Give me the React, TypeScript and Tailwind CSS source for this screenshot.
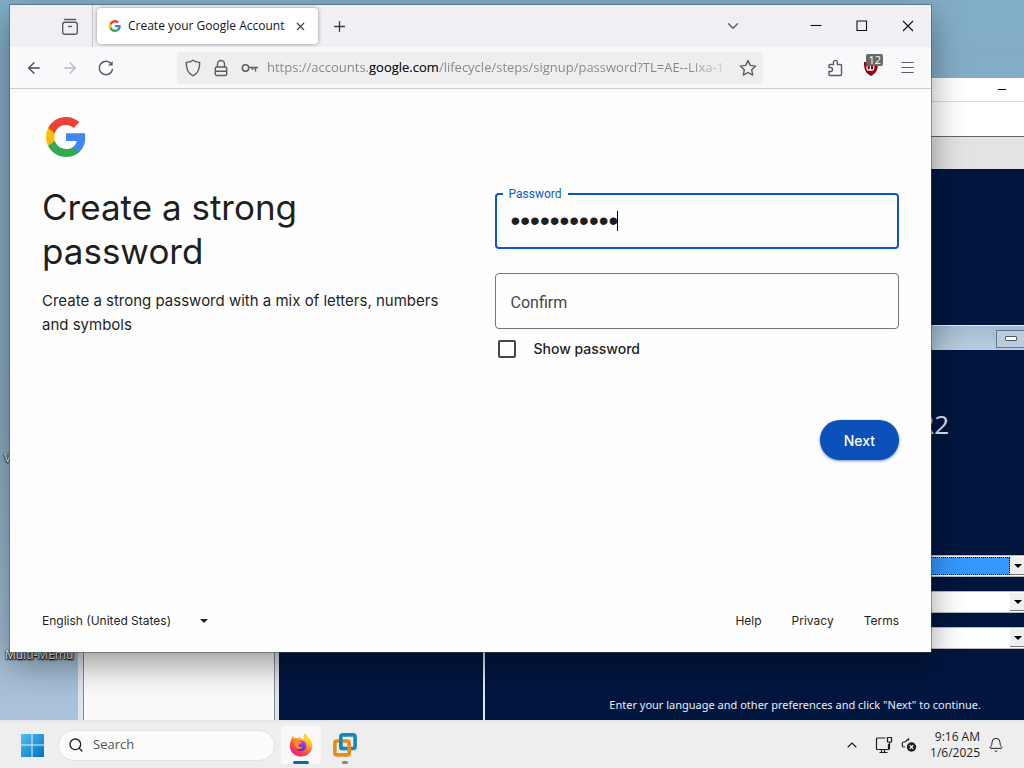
import { useState } from "react";
import type { ReactNode } from "react";
import { ArrowLeft, ArrowRight, Bell, ChevronDown, ChevronUp, Menu, Plus, Search, X } from "lucide-react";

const uiFont = "font-['Open_Sans','Noto_Sans',sans-serif]";
const pageFont = "font-['Inter',sans-serif]";

function GoogleMark({ className }: { className: string }) {
  return (
    <svg viewBox="0 0 40 40" className={className} aria-hidden="true">
      <path fill="#4285f4" d="M39.2 20.45c0-1.42-.13-2.78-.36-4.09H20v7.74h10.76c-.46 2.5-1.87 4.62-3.99 6.04v5.02h6.46c3.78-3.48 5.97-8.6 5.97-14.71z" />
      <path fill="#34a853" d="M20 40c5.4 0 9.93-1.79 13.24-4.84l-6.47-5.02c-1.79 1.2-4.08 1.9-6.77 1.9-5.2 0-9.62-3.51-11.2-8.24H2.13v5.18C5.42 35.51 12.17 40 20 40z" />
      <path fill="#fbbc04" d="M8.8 23.8c-.4-1.2-.63-2.48-.63-3.8s.23-2.6.63-3.8v-5.18H2.13A19.98 19.98 0 0 0 0 20c0 3.23.77 6.28 2.13 8.98L8.8 23.8z" />
      <path fill="#ea4335" d="M20 7.95c2.94 0 5.57 1.01 7.65 2.99l5.73-5.73C29.92 1.99 25.39 0 20 0 12.17 0 5.42 4.49 2.13 11.02L8.8 16.2C10.38 11.47 14.8 7.95 20 7.95z" />
    </svg>
  );
}

function FirefoxMark() {
  return (
    <svg viewBox="0 0 24 24" className="size-6" aria-hidden="true">
      <defs>
        <linearGradient id="flame" x1="0.85" y1="0" x2="0.2" y2="1">
          <stop offset="0" stopColor="#fff14f" />
          <stop offset="0.3" stopColor="#ffb92e" />
          <stop offset="0.6" stopColor="#ff5a36" />
          <stop offset="1" stopColor="#e31587" />
        </linearGradient>
        <linearGradient id="globe" x1="0.7" y1="0" x2="0.3" y2="1">
          <stop offset="0" stopColor="#a34bff" />
          <stop offset="1" stopColor="#4b2bb5" />
        </linearGradient>
      </defs>
      <path fill="url(#flame)" d="M15.2.6c2.2 1.3 3.6 3 4.2 4.7.6-.1 1.1.2 1.5.8 1.4 2 2.4 4.300 2.400 6.700C23.300 19 18.300 23.600 12.200 23.600 5.900 23.600.8 18.900.8 12.700c0-3 1-5.300 2-7 .1-1 .4-1.900 1.100-2.700.2 1 .7 1.700 1.400 2.200 1.100-.3 2.300-.3 3.300.1 1-.9 2.300-1.400 3.600-1.500-.4.500-.8 1.100-.9 1.800 1.300-.4 2.700-.2 3.900.5-.8-1.700-.9-3.800 0-5.500z" />
      <circle cx="12" cy="12.800" r="5.300" fill="url(#globe)" />
      <path fill="#ff8a26" d="M5.200 7.700c2-1 4.100-.7 5.500.7 1 .1 2 .6 2.300 1.300-.2 1-1.800 1.200-2.800 1.700-.9.5-.8 1.500-.1 2.200 1 .9 2.700.4 3.900-.1-.7 2-2.800 3-4.900 2.500C6.500 15.300 5 11.500 5.200 7.700z" />
      <path fill="#ffd43a" d="M15.200.6c2.200 1.300 3.600 3 4.200 4.700.4 2 .8 4 .4 6.300-.5-2.600-2-4.200-3.800-5.600-1-.9-1.500-3.400-.8-5.400z" />
    </svg>
  );
}

function VmwareMark() {
  return (
    <svg viewBox="0 0 24 24" className="size-6" fill="none" strokeWidth="3.600" aria-hidden="true">
      <rect x="7.800" y="1.900" width="14.300" height="13.600" rx="2" stroke="#1489b8" />
      <rect x="1.900" y="8" width="14.300" height="13.900" rx="2" stroke="#e8891a" />
      <path stroke="#1489b8" d="M7.800 6v8q0 1.500 1.500 1.500H12" />
    </svg>
  );
}

function IconButton({ label, className, children }: { label: string; className?: string; children: ReactNode }) {
  return (
    <button type="button" aria-label={label} className={`flex h-9 w-9 shrink-0 items-center justify-center ${className ?? "text-[#5b5b66]"}`}>
      {children}
    </button>
  );
}

function TabStrip() {
  return (
    <div className="flex h-[42px] shrink-0 items-center bg-[#f0f0f4]">
      <div className="flex w-[83px] justify-end self-stretch border-r border-[#c4c4ca] pr-1 pt-1">
        <IconButton label="View recent browsing">
          <svg viewBox="0 0 18 18" className="size-[18px]" fill="none" stroke="currentColor" strokeWidth="1.400" aria-hidden="true">
            <path d="M3.500 1.500h11" strokeLinecap="round" />
            <rect x="1.700" y="4.200" width="14.600" height="12" rx="2.200" />
            <path d="M7 8.500h4" />
          </svg>
        </IconButton>
      </div>
      <div className="ml-1 flex h-9 w-[221px] items-center rounded bg-white pl-3 pr-1 shadow-[0_0_4px_rgba(0,0,0,0.4)]">
        <GoogleMark className="size-3 shrink-0" />
        <span className="ml-[7px] grow whitespace-nowrap text-[12px] text-[#15141a]">Create your Google Account</span>
        <button type="button" aria-label="Close tab" className="flex size-7 shrink-0 items-center justify-center text-[#3b3b44]">
          <X size={13} strokeWidth={2} />
        </button>
      </div>
      <button type="button" aria-label="New tab" className="ml-[3px] flex size-9 items-center justify-center text-[#3b3b44]">
        <Plus size={17} strokeWidth={1.800} />
      </button>
      <div className="grow" />
      <IconButton label="List all tabs" className="mr-[42px] text-[#5b5b66]">
        <ChevronDown size={18} strokeWidth={1.800} />
      </IconButton>
      {[
        ["Minimize", "M0.500 5.500h11"],
        ["Maximize", "M1 1h9.500v9.500h-9.500z"],
        ["Close", "M1 1l10 10M11 1L1 11"],
      ].map(([label, d]) => (
        <button key={label} type="button" aria-label={label} className="flex h-full w-[46px] items-center justify-center">
          <svg viewBox="0 0 12 12" className="size-3" fill="none" stroke="#111" strokeWidth="1.100" aria-hidden="true">
            <path d={d} />
          </svg>
        </button>
      ))}
    </div>
  );
}

function AddressBar() {
  return (
    <div className="flex h-8 min-w-0 grow items-center rounded bg-[#eeeeef] pl-2 pr-px text-[#5b5b66]">
      <svg viewBox="0 0 16 18" className="h-[18px] w-4" fill="none" stroke="currentColor" strokeWidth="1.400" strokeLinejoin="round" aria-hidden="true">
        <path d="M8 1.200C6.200 2.600 3.800 3.300 1.300 3.400 1.200 9.500 3 14.400 8 16.800c5-2.400 6.800-7.300 6.700-13.400C12.200 3.300 9.800 2.600 8 1.200z" />
      </svg>
      <svg viewBox="0 0 14 18" className="ml-[13px] h-[18px] w-3.5" fill="none" stroke="currentColor" strokeWidth="1.400" aria-hidden="true">
        <rect x="1.300" y="8" width="11.400" height="8.500" rx="1.500" />
        <path d="M3.500 8V5a3.500 3.500 0 0 1 7 0v3M1.300 12.200h11.400" />
      </svg>
      <svg viewBox="0 0 18 12" className="ml-[13px] h-3 w-[18px] shrink-0" fill="none" stroke="currentColor" strokeWidth="1.500" aria-hidden="true">
        <circle cx="4.500" cy="6" r="3.200" />
        <path d="M7.700 5.500H17M14.500 5.500v4M11.500 5.500v2.500" />
      </svg>
      <div className="ml-2 min-w-0 grow overflow-hidden whitespace-nowrap bg-linear-to-r from-[#85858c] from-90% to-[#eeeeef] bg-clip-text text-[13px] text-transparent">
        https://accounts.<span className="text-[#15141a]">google.com</span>/lifecycle/steps/signup/password?TL=AE--LIxa-1
      </div>
      <button type="button" aria-label="Bookmark this page" className="flex size-7 shrink-0 items-center justify-center">
        <svg viewBox="0 0 18 18" className="size-[18px]" fill="none" stroke="currentColor" strokeWidth="1.400" strokeLinejoin="round" aria-hidden="true">
          <path d="M9 1.500l2.300 4.900 5.300.7-3.900 3.700 1 5.300L9 13.500l-4.700 2.600 1-5.300L1.400 7.100l5.300-.7z" />
        </svg>
      </button>
    </div>
  );
}

function NavBar() {
  return (
    <div className="flex h-[42px] shrink-0 items-center border-b border-[#ccccd1] bg-[#f9f9fb] px-[6px]">
      <IconButton label="Back" className="text-[#4a4a55]"><ArrowLeft size={18} strokeWidth={1.700} /></IconButton>
      <IconButton label="Forward" className="text-[#b9b9bf]"><ArrowRight size={18} strokeWidth={1.700} /></IconButton>
      <IconButton label="Reload">
        <svg viewBox="0 0 18 18" className="size-[18px]" fill="none" stroke="currentColor" strokeWidth="1.500" strokeLinecap="round" aria-hidden="true">
          <path d="M15.500 10.500A6.700 6.700 0 1 1 14 4.500" />
          <path d="M15.700 2v4.600h-4.600z" fill="currentColor" stroke="none" />
        </svg>
      </IconButton>
      <div className="flex min-w-0 grow pl-[53px] pr-[54px]">
        <AddressBar />
      </div>
      <IconButton label="Extensions">
        <svg viewBox="0 0 18 18" className="size-[18px]" fill="none" stroke="currentColor" strokeWidth="1.400" strokeLinejoin="round" aria-hidden="true">
          <path d="M3 8.500V6.500q0-1 1-1h3.500V3.300a1.900 1.900 0 0 1 3.800 0v2.200H14.500q1 0 1 1v9q0 1-1 1H4q-1 0-1-1v-3h1.500a2 2 0 0 0 0-4z" />
        </svg>
      </IconButton>
      <IconButton label="uBlock Origin, 12 blocked" className="relative">
        <svg viewBox="0 0 16 16" className="size-4" aria-hidden="true">
          <path fill="#8f0018" d="M8 0C5.500 1.500 3.500 2 1 2c0 7 1 11 7 14 6-3 7-7 7-14-2.500 0-4.500-.5-7-2z" />
          <path d="M4 6v2.500a1.700 1.700 0 0 0 3.400 0V6M7.400 8.500a1.700 1.700 0 0 0 3.400 0V6" fill="none" stroke="#fff" strokeWidth="1.200" />
        </svg>
        <span className="absolute right-1.5 top-1 rounded-[2px] bg-[#666b6b] px-0.5 text-[11px] leading-[12px] font-medium text-white">12</span>
      </IconButton>
      <IconButton label="Open application menu"><Menu size={17} strokeWidth={1.500} /></IconButton>
    </div>
  );
}

function SignupPage() {
  const [password, setPassword] = useState("abcdefghijk");
  const [confirm, setConfirm] = useState("");
  const [show, setShow] = useState(false);
  const type = show ? "text" : "password";
  return (
    <main className={`flex grow flex-col bg-[#fefefe] px-8 pt-6 text-[#1f1f1f] ${pageFont}`}>
      <div className="flex size-12 items-center justify-center">
        <GoogleMark className="size-10" />
      </div>
      <form className="grid grid-cols-2 gap-x-12 pt-6" onSubmit={(e) => e.preventDefault()}>
        <div>
          <h1 className="text-[35px] leading-[44px]">Create a strong password</h1>
          <p className="mt-4 text-[15px] leading-6">Create a strong password with a mix of letters, numbers and symbols</p>
        </div>
        <div className="flex flex-col pt-2">
          <div className="relative flex">
            <input
              id="password"
              type={type}
              value={password}
              onChange={(e) => setPassword(e.target.value)}
              className="h-14 w-full rounded border-2 border-[#0b57d0] px-3.5 font-['Liberation_Sans',sans-serif] text-[28px] caret-transparent outline-none"
            />
            <label htmlFor="password" className="absolute -top-2 left-2 bg-[#fefefe] px-1.5 font-['Roboto',sans-serif] text-[12px] leading-[18px] text-[#0b57d0]">
              Password
            </label>
            <span aria-hidden="true" className="absolute left-[122px] top-[18px] h-5 w-px bg-black" />
          </div>
          <div className="mt-6 flex">
            <input
              id="confirm"
              type={type}
              aria-label="Confirm"
              placeholder="Confirm"
              value={confirm}
              onChange={(e) => setConfirm(e.target.value)}
              className="h-14 w-full rounded border border-[#747775] px-[15px] pt-0.5 font-['Roboto',sans-serif] text-[16px] outline-none placeholder:text-[#444746]"
            />
          </div>
          <label className="mt-2.5 flex items-center gap-[18px] pl-[3px] text-[14px] leading-5 font-medium">
            <input
              type="checkbox"
              checked={show}
              onChange={(e) => setShow(e.target.checked)}
              className="size-[18px] appearance-none rounded-[2px] border-2 border-[#444746] checked:bg-[#0b57d0]"
            />
            Show password
          </label>
          <button type="submit" className="mt-[61px] h-10 self-end rounded-full bg-[#0b4fb9] px-6 text-[14px] font-medium text-white shadow-[0_1px_3px_rgba(20,60,140,0.6)]">
            Next
          </button>
        </div>
      </form>
      <footer className="mt-auto flex h-[62px] items-center text-[12px]">
        <label className="relative flex items-center">
          <select aria-label="Language" className="w-[172px] appearance-none bg-transparent">
            <option>English (United States)</option>
          </select>
          <svg viewBox="0 0 8 4" className="pointer-events-none absolute right-1.5 h-1 w-2" aria-hidden="true">
            <path d="M0 0h8L4 4z" fill="#1f1f1f" />
          </svg>
        </label>
        <nav className="ml-auto flex gap-[30px]">
          <a href="#help">Help</a>
          <a href="#privacy">Privacy</a>
          <a href="#terms">Terms</a>
        </nav>
      </footer>
    </main>
  );
}

function ClassicSelect({ label, active }: { label: string; active?: boolean }) {
  return (
    <div className="flex h-[22px] border border-[#b9b9b9] bg-white p-px">
      <select
        aria-label={label}
        className={active ? "min-w-0 grow appearance-none border border-dotted border-black bg-[#3399ff]" : "min-w-0 grow appearance-none bg-white"}
      />
      <span className="flex w-4 items-center justify-center border-b border-[#777] bg-[#efefef]">
        <svg viewBox="0 0 8 4" className="h-1 w-2" aria-hidden="true"><path d="M0 0h8L4 4z" fill="#000" /></svg>
      </span>
    </div>
  );
}

function VirtualMachineWindow() {
  return (
    <section aria-label="Virtual machine" className="absolute inset-y-0 left-[78px] right-0 top-[78px] flex flex-col bg-[#dfe5ee]">
      <div className="flex h-6 shrink-0 items-center justify-end border-b border-[#dcdcdc] bg-white pr-[18px]">
        <span className="h-px w-2 bg-black" />
      </div>
      <div className="h-[35px] shrink-0 border-b border-[#666] bg-white" />
      <div className="h-8 shrink-0 bg-[#e3e3e3]" />
      <div className="flex grow">
        <div className="ml-[5px] w-[192px] shrink-0 border-x border-[#888] bg-[#fafafa]" />
        <div className="ml-1 flex grow flex-col overflow-hidden bg-[#00163f]">
          <div className="h-[156px] shrink-0" />
          <div className="ml-[204px] flex grow flex-col border-l-2 border-[#dfe8f4]">
            <div className="flex h-[25px] shrink-0 items-center justify-end border-t border-[#e8f0f8] bg-linear-to-b from-[#a3bad1] to-[#b9cde1]">
              <span className="mt-px flex h-[18px] w-7 items-center justify-center border border-r-0 border-[#5f7590] bg-[#bccbdd]">
                <span className="h-[5px] w-3 rounded-[1px] border border-[#4d5968] bg-white" />
              </span>
            </div>
            <p className="mt-14 pr-[75px] text-right text-[26px] leading-9 text-[#dbe8fb]">R2</p>
            <div className="-mr-1 mt-[113px] flex flex-col gap-3.5 pl-[200px]">
              <ClassicSelect label="Language to install" active />
              <ClassicSelect label="Time and currency format" />
              <ClassicSelect label="Keyboard or input method" />
            </div>
            <p className="mt-12 pr-[43px] text-right font-['Noto_Sans',sans-serif] text-[11px] leading-4 text-[#e8eefa]">
              Enter your language and other preferences and click "Next" to continue.
            </p>
          </div>
        </div>
      </div>
    </section>
  );
}

function Taskbar() {
  return (
    <div className="flex h-12 shrink-0 items-center border-t-2 border-[#dfe7f1] bg-[#eeeeee] pl-5 pr-5">
      <button type="button" aria-label="Start" className="flex size-6 items-center justify-center">
        <svg viewBox="0 0 24 24" className="size-6" aria-hidden="true">
          <defs>
            <linearGradient id="start" x1="0" y1="0" x2="1" y2="1">
              <stop offset="0" stopColor="#4cc4ee" />
              <stop offset="1" stopColor="#0070c8" />
            </linearGradient>
          </defs>
          <path fill="url(#start)" d="M1 1h10.500v10.500H1zM12.500 1H24v10.500H12.500zM1 12.500h10.500V24H1zM12.500 12.500H24V24H12.500z" />
        </svg>
      </button>
      <label className="ml-[14px] flex h-[31px] w-[217px] items-center gap-[9px] rounded-full border border-[#e2e2e2] bg-[#fbfbfb] pl-[9px]">
        <Search size={16} strokeWidth={2} className="shrink-0 text-[#1f1f1f]" />
        <input type="search" aria-label="Search" placeholder="Search" className="w-40 bg-transparent text-[13px] outline-none placeholder:text-[#555]" />
      </label>
      <button type="button" aria-label="Firefox" className="relative ml-1.5 flex h-[38px] w-10 items-center justify-center rounded bg-[#f9f9f9]">
        <FirefoxMark />
        <span className="absolute bottom-0 h-[3px] w-4 rounded-full bg-[#0f6a9c]" />
      </button>
      <button type="button" aria-label="VMware Workstation" className="relative ml-1 flex h-[38px] w-10 items-center justify-center">
        <VmwareMark />
        <span className="absolute bottom-0 h-[3px] w-1.5 rounded-full bg-[#85858a]" />
      </button>
      <div className="ml-auto flex items-center text-[#1f1f1f]">
        <button type="button" aria-label="Show hidden icons"><ChevronUp size={16} strokeWidth={1.600} /></button>
        <svg viewBox="0 0 18 18" className="ml-[15px] size-[18px]" fill="none" stroke="currentColor" strokeWidth="1.200" aria-hidden="true">
          <path d="M10.500 2H2.500q-1 0-1 1v9.500q0 1 1 1h11V8M4.500 16.500h8M6.500 13.500v3M9.500 13.500v3" />
          <path d="M12.500 1.500h4v4.500h-4zM14.500 6v7.500" />
        </svg>
        <svg viewBox="0 0 16 16" className="ml-2 size-4" fill="none" stroke="currentColor" strokeWidth="1.200" aria-hidden="true">
          <path d="M7.500 3.500V2L4 5H2.500Q1.300 5 1.300 6.500v2Q1.300 10 2.500 10H4" />
          <circle cx="10.500" cy="10" r="4.700" fill="currentColor" stroke="none" />
          <path d="M8.700 8.200l3.600 3.600M12.300 8.200l-3.600 3.600" stroke="#fff" />
        </svg>
        <div className="ml-3 flex w-[51px] flex-col items-end text-[12px] leading-4 whitespace-nowrap">
          <span>9:16 AM</span>
          <span>1/6/2025</span>
        </div>
        <button type="button" aria-label="Notifications" className="ml-2"><Bell size={16} strokeWidth={1.500} /></button>
      </div>
    </div>
  );
}

export default function App() {
  return (
    <div className={`flex min-h-screen flex-col ${uiFont}`}>
      <div className="relative min-h-[640px] grow overflow-hidden bg-linear-to-b from-[#82adc8] via-[#8aabc0] via-60% to-[#aac3db]">
        <span className="absolute bottom-[254px] left-1 text-[12px] leading-4 text-white [text-shadow:0_1px_2px_#000,0_0_2px_#000]">V</span>
        <span className="absolute bottom-[57px] left-[5px] text-[12px] leading-4 text-white [text-shadow:0_1px_1px_#000,0_0_2px_#000,1px_1px_2px_#000]">Multi-MEmu</span>
        <VirtualMachineWindow />
        <section
          aria-label="Firefox"
          className="absolute bottom-[68px] left-2.5 right-[93px] top-[5px] flex flex-col shadow-[0_0_0_1px_rgba(70,80,90,0.5),0_12px_32px_rgba(0,0,0,0.4)]"
        >
          <TabStrip />
          <NavBar />
          <SignupPage />
        </section>
      </div>
      <Taskbar />
    </div>
  );
}
